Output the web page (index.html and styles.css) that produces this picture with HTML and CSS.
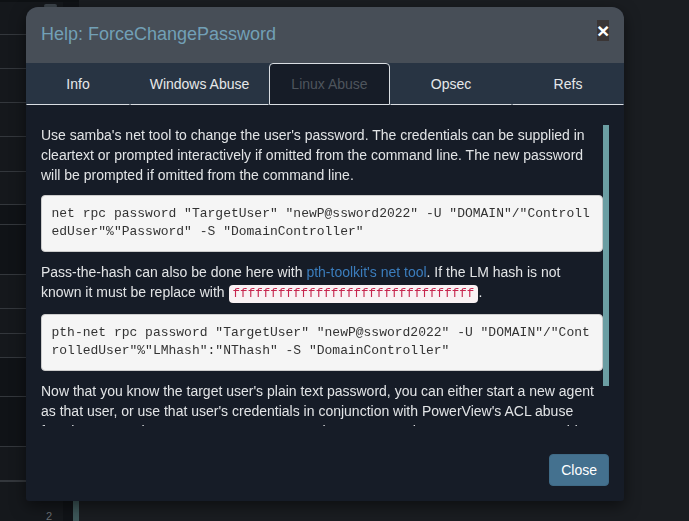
FILE: index.html
```html
<!DOCTYPE html>
<html lang="en">
<head>
<meta charset="utf-8">
<title>Help: ForceChangePassword</title>
<link rel="stylesheet" href="styles.css">
</head>
<body>
<div class="page">
  <aside class="sidebar">
    <div class="side-top"><span class="side-handle"></span></div>
    <div class="side-body">
      <ul class="side-list">
        <li class="row h33"></li>
        <li class="row h34"></li>
        <li class="row h34"></li>
        <li class="row h34"></li>
        <li class="row h35"></li>
        <li class="row h33"></li>
        <li class="row dark h20"></li>
        <li class="row dark h50"></li>
        <li class="row h34"></li>
        <li class="row h25"></li>
        <li class="row h24"></li>
        <li class="row dark h39"></li>
        <li class="row dark h50"></li>
        <li class="row h34"></li>
        <li class="row last"><span class="row-num">2</span></li>
      </ul>
      <div class="side-track"><div class="side-thumb"></div></div>
    </div>
  </aside>
</div>

<div class="overlay">
  <div class="modal">
    <div class="modal-header">
      <h4 class="modal-title">Help: ForceChangePassword</h4>
      <button class="close" type="button">&times;</button>
    </div>
    <ul class="tabs">
      <li class="tab">Info</li>
      <li class="tab">Windows Abuse</li>
      <li class="tab active">Linux Abuse</li>
      <li class="tab">Opsec</li>
      <li class="tab">Refs</li>
    </ul>
    <div class="modal-body">
      <div class="scroll">
        <p>Use samba's net tool to change the user's password. The credentials can be supplied in cleartext or prompted interactively if omitted from the command line. The new password will be prompted if omitted from the command line.</p>
        <pre>net rpc password "TargetUser" "newP@ssword2022" -U "DOMAIN"/"ControlledUser"%"Password" -S "DomainController"</pre>
        <p>Pass-the-hash can also be done here with <a href="#">pth-toolkit's net tool</a>. If the LM hash is not known it must be replace with <code>ffffffffffffffffffffffffffffffff</code>.</p>
        <pre>pth-net rpc password "TargetUser" "newP@ssword2022" -U "DOMAIN"/"ControlledUser"%"LMhash":"NThash" -S "DomainController"</pre>
        <p>Now that you know the target user's plain text password, you can either start a new agent as that user, or use that user's credentials in conjunction with PowerView's ACL abuse functions, or perhaps even RDP to a system the target user has access to. For more ideas and information, see the references tab.</p>
      </div>
      <div class="vbar"><div class="vthumb"></div></div>
    </div>
    <div class="modal-footer">
      <button class="btn" type="button">Close</button>
    </div>
  </div>
</div>
</body>
</html>
```
FILE: styles.css
```css
* { box-sizing: border-box; }
html, body { margin: 0; padding: 0; }
body {
  width: 689px;
  height: 521px;
  overflow: hidden;
  background: #1a1d21;
  font-family: "Liberation Sans", Arial, sans-serif;
  font-size: 14px;
  line-height: 20px;
  color: #e2e4e6;
}

/* background page (dimmed by backdrop) */
.page { height: 521px; display: flex; }
.sidebar { width: 79px; display: flex; flex-direction: column; }
.side-top { height: 27px; background: #0e1114; position: relative; }
.side-handle {
  position: absolute; left: 44px; top: 4px;
  width: 13px; height: 4px; border-radius: 2px; background: #3c444b;
}
.side-body { flex: 1; display: flex; background: #101317; }
.side-list { list-style: none; margin: 0; padding: 0; width: 63px; background: #15181c; }
.row { border-bottom: 1px solid #33373c; }
.row.dark { background: #101317; }
.h20 { height: 20px; } .h24 { height: 24px; } .h25 { height: 25px; }
.h33 { height: 33px; } .h34 { height: 34px; } .h35 { height: 35px; }
.h39 { height: 39px; } .h50 { height: 50px; }
.row.last { height: 40px; border-bottom: 0; border-top: 1px solid #33373c; padding: 24px 0 0 46px; color: #6b6f74; font-size: 11px; }
.side-track { width: 16px; display: flex; justify-content: flex-end; align-items: flex-end; }
.side-thumb { width: 6px; height: 60px; background: #3d5759; }

/* modal */
.overlay { position: fixed; inset: 0; padding: 7px 0 0 26px; }
.modal {
  width: 598px;
  background: #161c27;
  border-radius: 12px 12px 3px 3px;
  overflow: hidden;
  box-shadow: 0 5px 15px rgba(0, 0, 0, 0.5);
}
.modal-header {
  background: #474e57;
  padding: 15px;
  display: flex;
  justify-content: space-between;
  align-items: flex-start;
}
.modal-title {
  margin: 0;
  font-size: 18px;
  font-weight: normal;
  line-height: 25.7px;
  color: #72a0b6;
}
.close {
  margin-top: -2px;
  padding: 0;
  border: 0;
  background: #3a3535;
  color: #fff;
  font-family: "Liberation Sans", Arial, sans-serif;
  font-size: 21px;
  font-weight: bold;
  line-height: 21px;
  width: 12px;
  height: 21px;
}

.tabs {
  list-style: none;
  margin: 0;
  padding: 0;
  display: grid;
  grid-template-columns: 104px 139px 121px 122px 112px;
  background: #283443;
}
.tab {
  padding: 10px 0;
  text-align: center;
  color: #e6e8ea;
  border: 1px solid transparent;
  border-bottom-color: #d9dde2;
  border-radius: 4px 4px 0 0;
}
.tab.active {
  background: #161c27;
  border-color: #d9dde2;
  color: #4e555d;
}

.modal-body { padding: 20px 15px 13px; display: flex; height: 334px; }
.scroll { flex: 1; min-width: 0; overflow: hidden; }
.vbar { width: 6px; }
.vthumb { height: 261px; background: #6b9ea3; }
.scroll p { margin: 0 0 10px; }
.scroll a { color: #3b7dbd; text-decoration: none; }
pre {
  margin: 0 0 10px;
  padding: 9.5px;
  background: #f5f5f5;
  border: 1px solid #cccccc;
  border-radius: 4px;
  color: #333333;
  font-family: "Liberation Mono", "Courier New", monospace;
  font-size: 13px;
  line-height: 18px;
  white-space: pre-wrap;
  word-break: break-all;
}
code {
  padding: 2px 4px;
  font-family: "Liberation Mono", "Courier New", monospace;
  font-size: 90%;
  color: #c7254e;
  background: #f9f2f4;
  border-radius: 4px;
}

.modal-footer { padding: 15px; display: flex; justify-content: flex-end; }
.btn {
  padding: 6px 11px;
  border: 1px solid #3f6a86;
  border-radius: 4px;
  background: #44718f;
  color: #ffffff;
  font-family: "Liberation Sans", Arial, sans-serif;
  font-size: 14px;
  line-height: 18px;
}
```
